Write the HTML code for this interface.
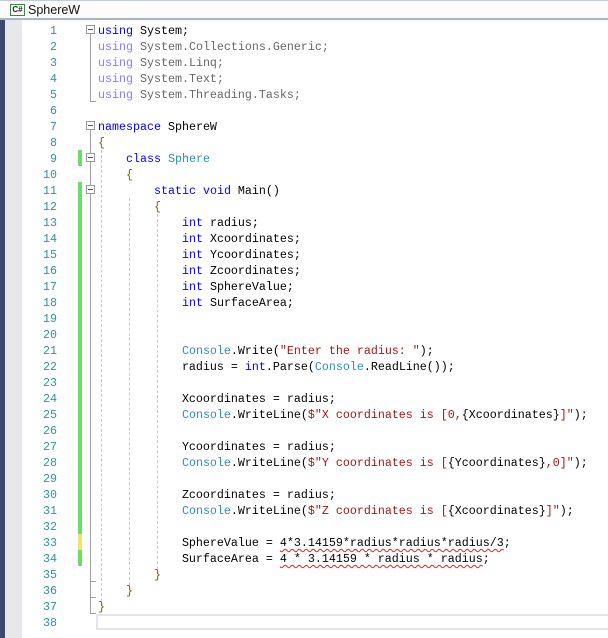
<!DOCTYPE html>
<html><head><style>
body{margin:0;width:608px;height:638px;overflow:hidden;background:#fff;font-family:"Liberation Mono",monospace;position:relative}
.tb{position:absolute;left:0;top:0;width:608px;height:20px;background:#fcfcfc;border-top:1px solid #c4cbd8;border-bottom:2px solid #aab4c8;box-sizing:border-box}
.tb .ic{position:absolute;left:10px;top:3px;width:15px;height:12px;border:1px solid #3a8a3a;box-sizing:border-box;font:bold 8px "Liberation Sans",sans-serif;line-height:10px;text-align:center;color:#222}
.tb .t{position:absolute;left:28px;top:2px;font:12.5px "Liberation Sans",sans-serif;color:#111}
.lb{position:absolute;left:0;top:20px;width:5px;height:618px;background:#3d4b6b}
.lg{position:absolute;left:5px;top:20px;width:17px;height:618px;background:#e8e8ec}
.n{position:absolute;left:22px;width:35px;text-align:right;font-size:11.67px;line-height:16px;color:#2b91af}
.c{position:absolute;left:98px;font-size:11.67px;line-height:16px;white-space:pre;color:#000}
.k{color:#0000ff}.ty{color:#2b91af}.s{color:#a31515}.g{color:#8a7bff}.gy{color:#666}.b{color:#8a5a00}
.sq{text-decoration:underline wavy #e02020;text-underline-offset:2px;text-decoration-thickness:1px}
.gr{position:absolute;left:78px;width:4px;background:#6ddb6d}
.fb{position:absolute;left:86px;width:9px;height:9px;border:1px solid #999;box-sizing:border-box;background:#fff}
.fb:after{content:"";position:absolute;left:1px;top:3px;width:5px;height:1px;background:#555}
.vl{position:absolute;left:90px;width:1px;background:#a0a0a0}
.tk{position:absolute;left:90px;width:6px;height:1px;background:#a0a0a0}
.ig{position:absolute;width:0;border-left:1px dashed #c8c8c8}
</style></head><body>
<div class="tb"><div class="ic">C#</div><div class="t">SphereW</div></div>
<div class="lb"></div><div class="lg"></div>

<div class="gr" style="top:150px;height:16px"></div>
<div class="gr" style="top:182px;height:352px"></div>
<div class="gr" style="top:534px;height:16px;background:#f5e36a"></div>
<div class="gr" style="top:550px;height:16px"></div>

<div class="vl" style="top:34px;height:68px"></div><div class="tk" style="top:101px"></div>
<div class="vl" style="top:130px;height:484px"></div>
<div class="tk" style="top:581px"></div><div class="tk" style="top:597px"></div><div class="tk" style="top:613px"></div>
<div class="fb" style="top:25px"></div>
<div class="fb" style="top:121px"></div>
<div class="fb" style="top:153px"></div>
<div class="fb" style="top:185px"></div>

<div class="ig" style="left:101px;top:150px;height:456px"></div>
<div class="ig" style="left:129px;top:198px;height:392px"></div>
<div class="ig" style="left:157px;top:214px;height:360px"></div>

<div style="position:absolute;left:96px;top:614px;width:520px;height:16px;border:2px solid #e4e4ec;box-sizing:border-box;border-right:none"></div>

<div class="n" style="top:23px">1<br>2<br>3<br>4<br>5<br>6<br>7<br>8<br>9<br>10<br>11<br>12<br>13<br>14<br>15<br>16<br>17<br>18<br>19<br>20<br>21<br>22<br>23<br>24<br>25<br>26<br>27<br>28<br>29<br>30<br>31<br>32<br>33<br>34<br>35<br>36<br>37<br>38</div>

<div class="c" style="top:23px"><span class="k">using</span> System;
<span class="g">using</span> <span class="gy">System.Collections.Generic;</span>
<span class="g">using</span> <span class="gy">System.Linq;</span>
<span class="g">using</span> <span class="gy">System.Text;</span>
<span class="g">using</span> <span class="gy">System.Threading.Tasks;</span>

<span class="k">namespace</span> SphereW
<span class="b">{</span>
    <span class="k">class</span> <span class="ty">Sphere</span>
    <span class="b">{</span>
        <span class="k">static</span> <span class="k">void</span> Main()
        <span class="b">{</span>
            <span class="k">int</span> radius;
            <span class="k">int</span> Xcoordinates;
            <span class="k">int</span> Ycoordinates;
            <span class="k">int</span> Zcoordinates;
            <span class="k">int</span> SphereValue;
            <span class="k">int</span> SurfaceArea;


            <span class="ty">Console</span>.Write(<span class="s">"Enter the radius: "</span>);
            radius = <span class="k">int</span>.Parse(<span class="ty">Console</span>.ReadLine());

            Xcoordinates = radius;
            <span class="ty">Console</span>.WriteLine(<span class="s">$"X coordinates is [0,</span>{Xcoordinates}<span class="s">]"</span>);

            Ycoordinates = radius;
            <span class="ty">Console</span>.WriteLine(<span class="s">$"Y coordinates is [</span>{Ycoordinates}<span class="s">,0]"</span>);

            Zcoordinates = radius;
            <span class="ty">Console</span>.WriteLine(<span class="s">$"Z coordinates is [</span>{Xcoordinates}<span class="s">]"</span>);

            SphereValue = <span class="sq">4*3.14159*radius*radius*radius/3</span>;
            SurfaceArea = <span class="sq">4 * 3.14159 * radius * radius</span>;
        <span class="b">}</span>
    <span class="b">}</span>
<span class="b">}</span>
</div>
</body></html>
